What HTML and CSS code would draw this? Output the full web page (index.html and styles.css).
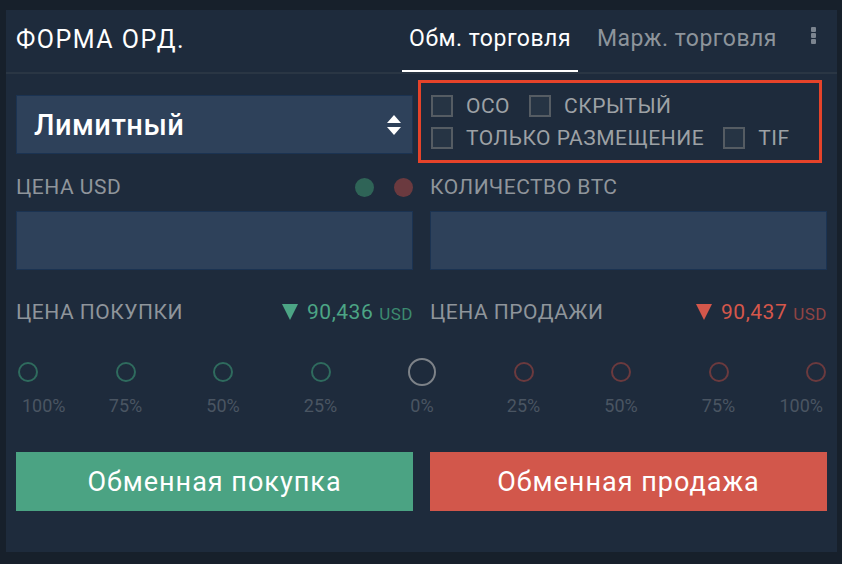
FILE: index.html
```html
<!DOCTYPE html>
<html lang="ru">
<head>
    <meta charset="UTF-8">
    <meta name="viewport" content="width=device-width, initial-scale=1.0">
    <title>Форма ордера</title>
    <link rel="stylesheet" href="styles.css">
</head>
<body>
    <div class="panel">
        <div class="header">
            <h1 class="title">ФОРМА ОРД.</h1>
            <div class="tabs">
                <span class="tab active">Обм. торговля</span>
                <span class="tab">Марж. торговля</span>
            </div>
            <svg class="kebab" width="5" height="17" viewBox="0 0 5 17">
                <rect x="0" y="0" width="5" height="5" rx="1" fill="#7c8590"/>
                <rect x="0" y="6" width="5" height="5" rx="1" fill="#7c8590"/>
                <rect x="0" y="12" width="5" height="5" rx="1" fill="#7c8590"/>
            </svg>
        </div>

        <div class="form">
            <div class="grid top-row">
                <div class="select">
                    <span>Лимитный</span>
                    <svg width="14" height="20" viewBox="0 0 14 20">
                        <polygon points="7,0 14,8 0,8" fill="#fff"/>
                        <polygon points="0,12 14,12 7,20" fill="#fff"/>
                    </svg>
                </div>
                <div class="options">
                    <div class="option-row">
                        <label class="check"><span class="box"></span>ОСО</label>
                        <label class="check"><span class="box"></span>СКРЫТЫЙ</label>
                    </div>
                    <div class="option-row">
                        <label class="check"><span class="box"></span>ТОЛЬКО РАЗМЕЩЕНИЕ</label>
                        <label class="check"><span class="box"></span>TIF</label>
                    </div>
                </div>
            </div>

            <div class="grid labels">
                <div class="label-row">
                    <span>ЦЕНА USD</span>
                    <span class="dots"><i class="dot green"></i><i class="dot red"></i></span>
                </div>
                <div class="label-row">
                    <span>КОЛИЧЕСТВО BTC</span>
                </div>
            </div>

            <div class="grid">
                <div class="input"></div>
                <div class="input"></div>
            </div>

            <div class="grid prices">
                <div class="price-row">
                    <span>ЦЕНА ПОКУПКИ</span>
                    <span class="price buy">
                        <svg width="16" height="16" viewBox="0 0 16 16"><polygon points="0,0 16,0 8,16" fill="#4ca585"/></svg>
                        90,436 <small>USD</small>
                    </span>
                </div>
                <div class="price-row">
                    <span>ЦЕНА ПРОДАЖИ</span>
                    <span class="price sell">
                        <svg width="16" height="16" viewBox="0 0 16 16"><polygon points="0,0 16,0 8,16" fill="#d4574b"/></svg>
                        90,437 <small>USD</small>
                    </span>
                </div>
            </div>

            <div class="slider">
                <div class="stop first buy"><i class="ring"></i><span>100%</span></div>
                <div class="stop buy"><i class="ring"></i><span>75%</span></div>
                <div class="stop buy"><i class="ring"></i><span>50%</span></div>
                <div class="stop buy"><i class="ring"></i><span>25%</span></div>
                <div class="stop zero"><i class="ring"></i><span>0%</span></div>
                <div class="stop sell"><i class="ring"></i><span>25%</span></div>
                <div class="stop sell"><i class="ring"></i><span>50%</span></div>
                <div class="stop sell"><i class="ring"></i><span>75%</span></div>
                <div class="stop last sell"><i class="ring"></i><span>100%</span></div>
            </div>

            <div class="grid actions">
                <button class="btn buy-btn">Обменная покупка</button>
                <button class="btn sell-btn">Обменная продажа</button>
            </div>
        </div>
    </div>
</body>
</html>
```

FILE: styles.css
```css
body {
    margin: 0;
    background-color: #17202b;
    font-family: Roboto, "Liberation Sans", sans-serif;
    color: #fff;
}
.panel {
    margin: 10px 0 0 6px;
    width: 831px;
    height: 542px;
    background-color: #1e2b3c;
}
.header {
    display: flex;
    align-items: stretch;
    height: 62px;
    border-bottom: 2px solid #2a3644;
}
.title {
    margin: 0;
    padding-left: 10px;
    font-size: 25px;
    font-weight: 400;
    letter-spacing: 1.5px;
    line-height: 60px;
}
.tabs {
    display: flex;
    margin-left: auto;
}
.tab {
    padding: 0 7px;
    margin-left: 12px;
    font-size: 23px;
    letter-spacing: 0.5px;
    line-height: 58px;
    color: #8d949b;
    border-bottom: 2px solid transparent;
}
.tab.active {
    color: #fff;
    border-bottom-color: #fff;
}
.kebab {
    margin: 17px 21px 0 27px;
}
.form {
    padding: 0 10px;
}
.grid {
    display: grid;
    grid-template-columns: 397px 397px;
    column-gap: 17px;
}
.top-row {
    margin-top: 6px;
}
.select {
    display: flex;
    align-items: center;
    justify-content: space-between;
    margin-top: 15px;
    height: 59px;
    box-sizing: border-box;
    padding: 0 11px 0 17px;
    background-color: #2e415a;
    border: 1px solid #1b3352;
    font-size: 29px;
    font-weight: 500;
    letter-spacing: 0.5px;
}
.options {
    margin-left: -12px;
    width: 404px;
    height: 83px;
    box-sizing: border-box;
    border: 3px solid #e5432a;
    padding: 12px 0 0 10px;
}
.option-row {
    display: flex;
    gap: 19px;
    margin-bottom: 10px;
}
.check {
    display: flex;
    align-items: center;
    gap: 13px;
    height: 22px;
    font-size: 21px;
    letter-spacing: 0.5px;
    color: #9da1a5;
}
.box {
    width: 22px;
    height: 22px;
    box-sizing: border-box;
    border: 2px solid #555c63;
    background-color: #263444;
}
.labels {
    margin: 12px 0;
}
.label-row,
.price-row {
    display: flex;
    align-items: center;
    justify-content: space-between;
    height: 24px;
    font-size: 21px;
    letter-spacing: 0.5px;
    color: #8f959b;
}
.dots {
    display: flex;
    gap: 20px;
}
.dot {
    width: 19px;
    height: 19px;
    border-radius: 50%;
}
.dot.green {
    background-color: #2f6457;
}
.dot.red {
    background-color: #6b3a3f;
}
.input {
    height: 59px;
    box-sizing: border-box;
    background-color: #2e415a;
    border: 1px solid #1b3352;
}
.prices {
    margin-top: 30px;
}
.price {
    display: flex;
    align-items: center;
    font-size: 21px;
}
.price svg {
    margin-right: 9px;
}
.price small {
    margin-left: 6px;
    padding-top: 3px;
    font-size: 17px;
}
.price.buy {
    color: #4ca585;
}
.price.buy small {
    color: #3c8a6f;
}
.price.sell {
    color: #d4574b;
}
.price.sell small {
    color: #8f4444;
}
.slider {
    display: flex;
    justify-content: space-between;
    margin-top: 34px;
    padding: 0 1px 0 2px;
}
.stop {
    display: flex;
    flex-direction: column;
    align-items: center;
    width: 20px;
}
.ring {
    display: block;
    width: 20px;
    height: 20px;
    margin: 4px 0;
    box-sizing: border-box;
    border-radius: 50%;
    border: 2px solid #2f6b5e;
}
.stop.sell .ring {
    border-color: #6b3a3e;
}
.stop.zero {
    width: 28px;
}
.stop.zero .ring {
    width: 28px;
    height: 28px;
    margin: 0;
    border-color: #7d8288;
}
.stop span {
    margin-top: 10px;
    font-size: 18px;
    line-height: 20px;
    color: #4a5562;
    white-space: nowrap;
}
.stop.first {
    align-items: flex-start;
}
.stop.first span {
    margin-left: 4px;
}
.stop.last {
    align-items: flex-end;
}
.stop.last span {
    margin-right: 3px;
}
.actions {
    margin-top: 36px;
}
.btn {
    height: 59px;
    border: none;
    font-family: inherit;
    font-size: 27px;
    letter-spacing: 1px;
    color: #fff;
    cursor: pointer;
}
.buy-btn {
    background-color: #4ba383;
}
.sell-btn {
    background-color: #d2574b;
}
```
